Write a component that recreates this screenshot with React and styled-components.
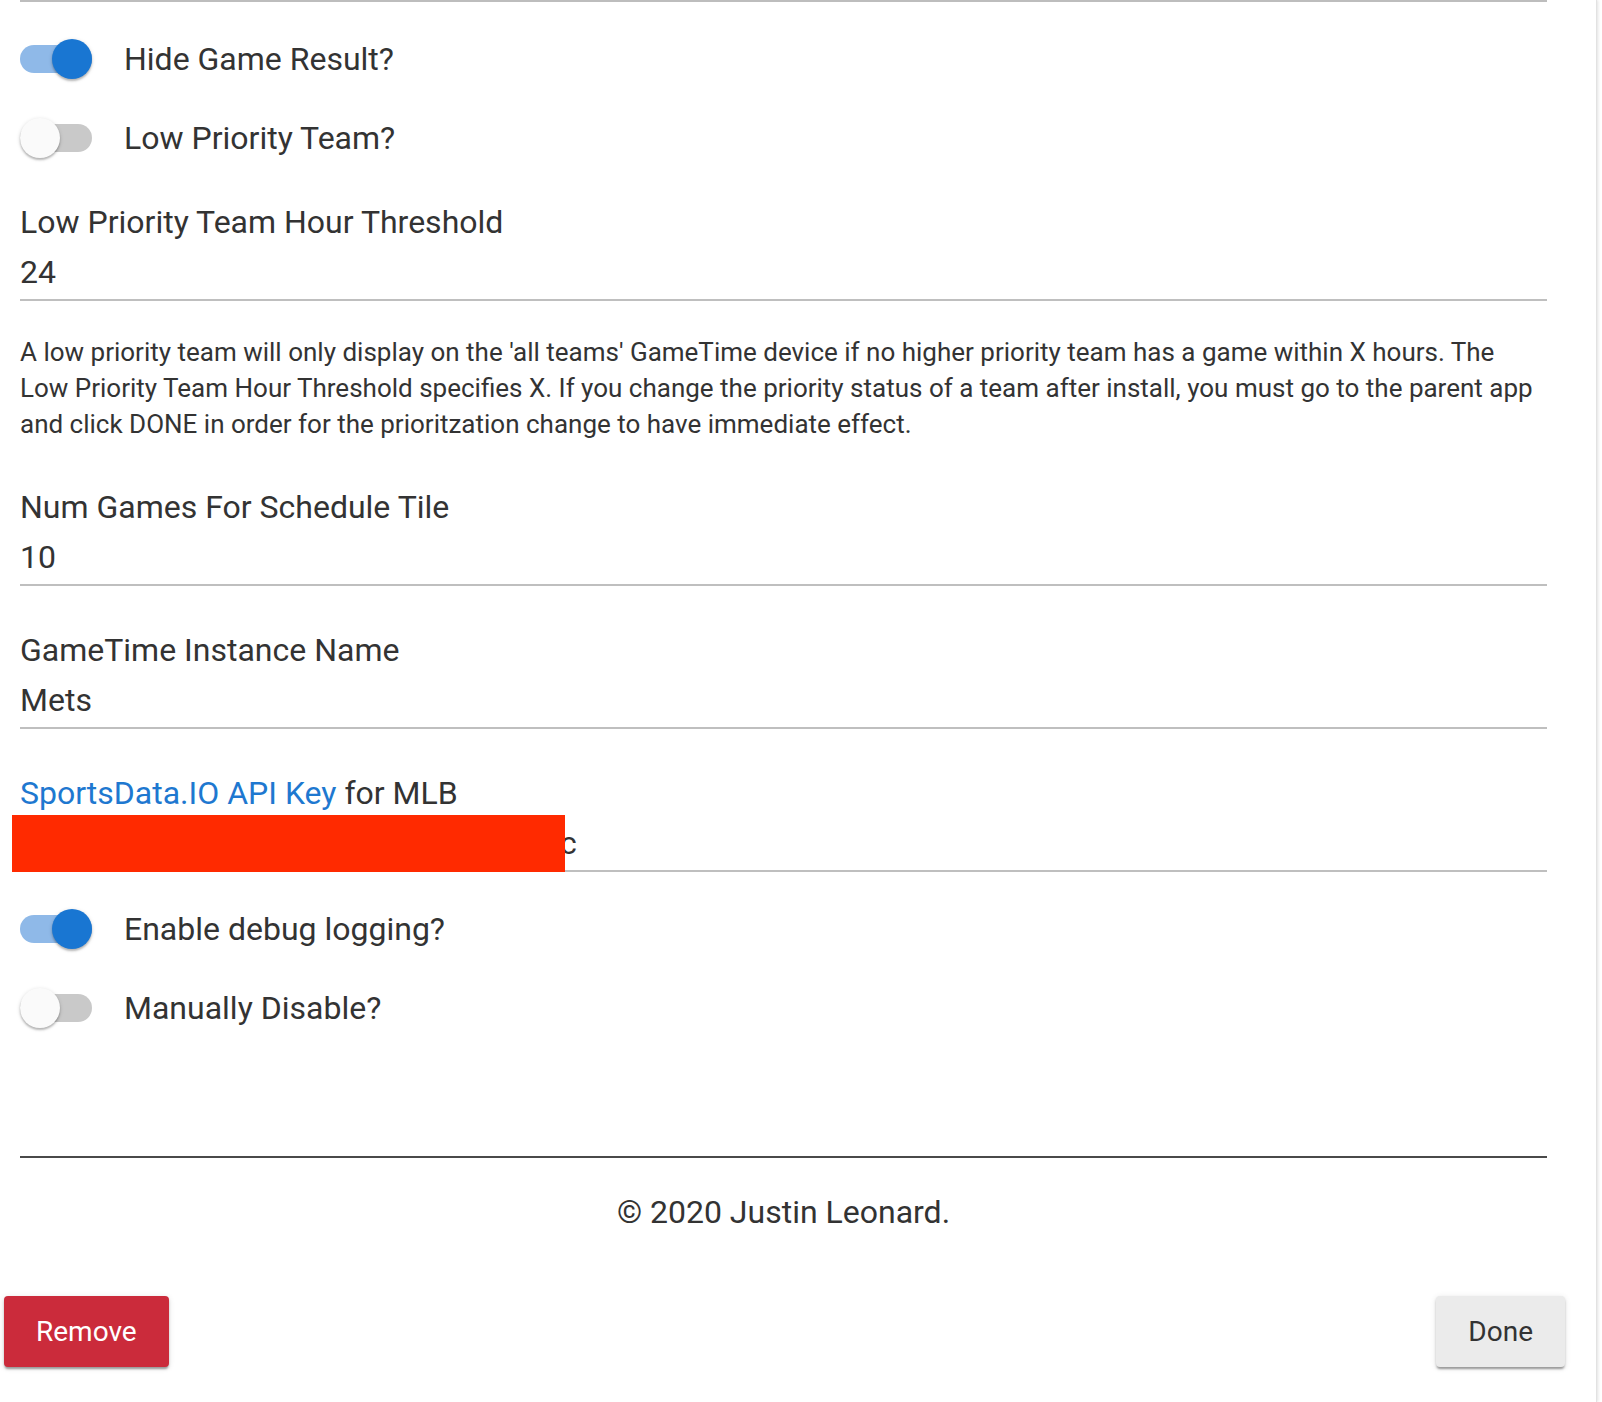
import React, { useState } from "react";
import styled, { createGlobalStyle } from "styled-components";

const GlobalStyle = createGlobalStyle`
  html, body {
    margin: 0;
    padding: 0;
    background: #ffffff;
  }
  body {
    font-family: Roboto, "Noto Sans", "Liberation Sans", sans-serif;
    color: #333333;
  }
`;

const Page = styled.div`
  width: 1602px;
  height: 1402px;
  overflow: hidden;
  background: #ffffff;
`;

const Panel = styled.div`
  width: 1596px;
  height: 1402px;
  border-right: 1px solid #e2e2e2;
  box-shadow: 1px 0 3px rgba(0, 0, 0, 0.12);
  display: flex;
  flex-direction: column;
`;

const Content = styled.div`
  margin: 0 49px 0 20px;
  border-top: 2px solid #bdbdbd;
`;

const SwitchGroup = styled.div`
  display: flex;
  flex-direction: column;
  gap: 39px;
  padding-top: ${props => props.$top}px;
`;

const SwitchRow = styled.label`
  display: flex;
  align-items: center;
  height: 40px;
  gap: 32px;
  font-size: 32px;
  cursor: pointer;
`;

const Track = styled.span`
  position: relative;
  flex: none;
  width: 72px;
  height: 28px;
  border-radius: 14px;
  background: ${props => (props.$on ? "#8fb9e8" : "#c9c9c9")};
`;

const Knob = styled.span`
  position: absolute;
  top: -6px;
  left: ${props => (props.$on ? "32px" : "0")};
  width: 40px;
  height: 40px;
  border-radius: 50%;
  background: ${props => (props.$on ? "#1976d2" : "#fafafa")};
  box-shadow: 0 2px 2px rgba(0, 0, 0, 0.22), 0 1px 4px rgba(0, 0, 0, 0.14);
`;

const Field = styled.div`
  position: relative;
  padding-top: 40px;
`;

const FieldLabel = styled.div`
  font-size: 32px;
  line-height: 48px;
  color: #333333;
`;

const LinkText = styled.a`
  color: #1e78d0;
  text-decoration: none;
`;

const FieldValue = styled.div`
  margin-top: 2px;
  padding-bottom: 3px;
  font-size: 32px;
  line-height: 48px;
  color: #333333;
  border-bottom: 2px solid #bfbfbf;
`;

const Hidden = styled.span`
  display: inline-block;
  width: 540px;
`;

const Redaction = styled.div`
  position: absolute;
  left: -8px;
  top: 86px;
  width: 553px;
  height: 57px;
  background: #ff2a00;
`;

const Description = styled.p`
  margin: 33px 0 1px;
  font-size: 26px;
  line-height: 36px;
  color: #333333;
`;

const Divider = styled.hr`
  margin: 128px 0 0;
  border: 0;
  border-top: 2px solid #4a4a4a;
`;

const Copyright = styled.div`
  margin-top: 30px;
  text-align: center;
  font-size: 32px;
  line-height: 48px;
  color: #333333;
`;

const Footer = styled.div`
  display: flex;
  justify-content: space-between;
  padding: 0 31px 0 4px;
  margin-top: 60px;
`;

const Button = styled.button`
  height: 71px;
  padding: 0 ${props => props.$pad}px;
  border: 0;
  border-radius: 4px;
  font-family: Roboto, "Noto Sans", "Liberation Sans", sans-serif;
  font-size: 28px;
  color: ${props => (props.$danger ? "#ffffff" : "#333333")};
  background: ${props => (props.$danger ? "#cb2b3b" : "#ebebeb")};
  box-shadow: 0 3px 2px -1px rgba(0, 0, 0, 0.25),
    0 2px 3px 0 rgba(0, 0, 0, 0.16), 0 1px 6px 0 rgba(0, 0, 0, 0.1);
  cursor: pointer;
`;

const Toggle = ({ label, value, onChange }) => (
  <SwitchRow onClick={() => onChange(!value)}>
    <Track $on={value}>
      <Knob $on={value} />
    </Track>
    {label}
  </SwitchRow>
);

const App = () => {
  const [hideResult, setHideResult] = useState(true);
  const [lowPriority, setLowPriority] = useState(false);
  const [debug, setDebug] = useState(true);
  const [disabled, setDisabled] = useState(false);

  return (
    <Page>
      <GlobalStyle />
      <Panel>
        <Content>
          <SwitchGroup $top={37}>
            <Toggle
              label="Hide Game Result?"
              value={hideResult}
              onChange={setHideResult}
            />
            <Toggle
              label="Low Priority Team?"
              value={lowPriority}
              onChange={setLowPriority}
            />
          </SwitchGroup>

          <Field>
            <FieldLabel>Low Priority Team Hour Threshold</FieldLabel>
            <FieldValue>24</FieldValue>
          </Field>

          <Description>
            A low priority team will only display on the 'all teams' GameTime
            device if no higher priority team has a game within X hours. The
            Low Priority Team Hour Threshold specifies X. If you change the
            priority status of a team after install, you must go to the parent
            app and click DONE in order for the prioritzation change to have
            immediate effect.
          </Description>

          <Field>
            <FieldLabel>Num Games For Schedule Tile</FieldLabel>
            <FieldValue>10</FieldValue>
          </Field>

          <Field>
            <FieldLabel>GameTime Instance Name</FieldLabel>
            <FieldValue>Mets</FieldValue>
          </Field>

          <Field>
            <FieldLabel>
              <LinkText href="#">SportsData.IO API Key</LinkText> for MLB
            </FieldLabel>
            <FieldValue>
              <Hidden />c
            </FieldValue>
            <Redaction />
          </Field>

          <SwitchGroup $top={37}>
            <Toggle
              label="Enable debug logging?"
              value={debug}
              onChange={setDebug}
            />
            <Toggle
              label="Manually Disable?"
              value={disabled}
              onChange={setDisabled}
            />
          </SwitchGroup>

          <Divider />
          <Copyright>© 2020 Justin Leonard.</Copyright>
        </Content>

        <Footer>
          <Button $danger $pad={32}>
            Remove
          </Button>
          <Button $pad={32}>Done</Button>
        </Footer>
      </Panel>
    </Page>
  );
};

export default App;
